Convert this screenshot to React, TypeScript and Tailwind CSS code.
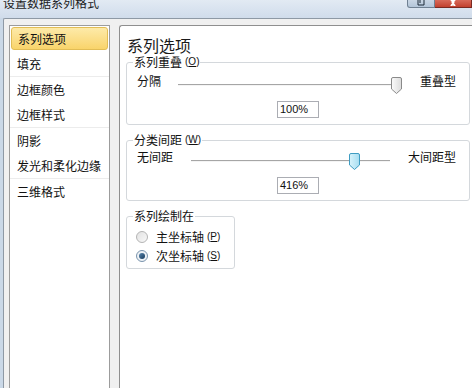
import React from 'react';

const cjk = "font-['Noto_Sans_CJK_SC',sans-serif]";
const latin = "font-['Liberation_Sans',sans-serif]";

const navGroups = [
  ['系列选项', '填充'],
  ['边框颜色', '边框样式'],
  ['阴影', '发光和柔化边缘'],
  ['三维格式'],
];

function Key({ k }: { k: string }) {
  return (
    <span className={`${latin} text-[10px] ml-[3px]`}>
      (<span className="underline">{k}</span>)
    </span>
  );
}

function Slider({ width, track, thumb, active }: { width: number; track: number; thumb: number; active?: boolean }) {
  return (
    <div className="relative h-[18px] shrink-0" style={{ width }}>
      <div className="absolute left-0 top-[11px] h-px bg-[#a6a6a6]" style={{ width: track }} />
      <div className="absolute left-0 top-[12px] h-px bg-[#f4f4f4]" style={{ width: track }} />
      <svg className="absolute top-[4px]" style={{ left: thumb }} width="11" height="17" viewBox="0 0 11 17">
        <defs>
          <linearGradient id={active ? 'tb' : 'tg'} x1="0" y1="0" x2="1" y2="0">
            <stop offset="0" stopColor={active ? '#d8f3fb' : '#fbfbfb'} />
            <stop offset="1" stopColor={active ? '#a6ddf1' : '#dcdcdc'} />
          </linearGradient>
        </defs>
        <path
          d="M2 0.5 H9 Q10.5 0.5 10.5 2 V12 L5.5 16.5 L0.5 12 V2 Q0.5 0.5 2 0.5 Z"
          fill={`url(#${active ? 'tb' : 'tg'})`}
          stroke={active ? '#3f9cc2' : '#8a8a8a'}
        />
      </svg>
    </div>
  );
}

function SliderGroup({
  legend,
  k,
  left,
  right,
  gap,
  slider,
  value,
  rowMt,
}: {
  legend: string;
  k: string;
  left: string;
  right: string;
  gap: number;
  slider: { width: number; track: number; thumb: number; active?: boolean };
  value: string;
  rowMt: string;
}) {
  return (
    <fieldset className="mr-[2px] border border-[#d4d8dc] rounded-[3px] pb-[6px]">
      <legend className="ml-[6px] px-[1px] text-[12px] leading-[14px] flex items-center">
        {legend}
        <Key k={k} />
      </legend>
      <div className={`flex items-center h-[18px] pl-[10px] pr-[13px] text-[12px] ${rowMt}`}>
        <span className="leading-[14px] -mt-[2px]">{left}</span>
        <div style={{ marginLeft: gap }}>
          <Slider {...slider} />
        </div>
        <span className="ml-auto leading-[14px] -mt-[2px]">{right}</span>
      </div>
      <div className={`${latin} mx-auto mt-[10px] w-[42px] h-[17px] border border-[#abadb3] bg-white text-[11px] leading-[15px] pl-[2px]`}>
        {value}
      </div>
    </fieldset>
  );
}

function Radio({ checked, label, k }: { checked?: boolean; label: string; k: string }) {
  return (
    <div className="flex items-center h-[19px] pl-[9px]">
      <span
        className={`w-[12px] h-[12px] rounded-full border flex items-center justify-center ${
          checked ? 'border-[#7a94ad] bg-[#eef2f6]' : 'border-[#b4b4b4] bg-gradient-to-br from-[#e2e2e2] to-[#f8f8f8]'
        }`}
      >
        {checked && <span className="w-[6px] h-[6px] rounded-full bg-gradient-to-br from-[#5a87ad] to-[#173b5d]" />}
      </span>
      <span className="ml-[8px] text-[12px] leading-[14px]">{label}</span>
      <Key k={k} />
    </div>
  );
}

export default function App() {
  return (
    <div className={`${cjk} w-[472px] h-[388px] overflow-hidden flex flex-col bg-[#cad8e7] text-[#111]`}>
      {/* title bar */}
      <div className="h-[18px] shrink-0 flex items-start justify-between bg-gradient-to-b from-[#e2eaf3] to-[#d0dceb]">
        <span className="ml-[3px] -mt-[3px] text-[12px] leading-[12px] text-[#1b1b1b]">设置数据系列格式</span>
        <div className="flex">
          <div className="w-[28px] h-[8px] border border-t-0 border-[#6f8092] rounded-bl-[3px] bg-gradient-to-b from-[#c9d6e4] to-[#b3c5d9] flex justify-center">
            <svg width="8" height="6" viewBox="0 0 8 6">
              <path d="M1 0 V5 H7 V0 M3 3 V0" stroke="#1d2a38" fill="none" />
            </svg>
          </div>
          <div className="w-[37px] h-[8px] border border-t-0 border-l-0 border-[#7a2a22] bg-gradient-to-b from-[#d86a5a] to-[#c2402e] flex justify-center">
            <svg width="12" height="6" viewBox="0 0 12 6">
              <path d="M2 -3 L7 3 M10 -3 L5 3 M4 6 L6 3.5 M8 6 L6 3.5" stroke="#fff" strokeWidth="2" fill="none" />
            </svg>
          </div>
        </div>
      </div>

      {/* client */}
      <div className="flex-1 min-h-0 flex pl-[3px]">
        <div className="flex-1 flex gap-[9px] bg-[#f0f0f0] border-l border-t border-[#8e99a5] rounded-tl-[2px] pt-[6px] pl-[5px]">
          {/* nav list */}
          <div className="w-[101px] shrink-0 bg-white border border-b-0 border-[#9c9c9c] text-[12px]">
            {navGroups.map((group, gi) => (
              <div key={gi} className={gi < navGroups.length - 1 ? 'border-b border-[#ececec]' : ''}>
                {group.map((item) => {
                  const sel = item === '系列选项';
                  return (
                    <div key={item} className="h-[25px] p-[1px]">
                      <div
                        className={`h-full flex items-center pl-[6px] leading-[14px] rounded-[3px] ${
                          sel ? 'bg-gradient-to-b from-[#fdeaa8] to-[#f9d46a] border border-[#e2bd55] pl-[5px]' : ''
                        }`}
                      >
                        {item}
                      </div>
                    </div>
                  );
                })}
              </div>
            ))}
          </div>

          {/* content panel */}
          <div className="flex-1 bg-white border-l border-t border-[#8f8f8f] rounded-tl-[3px] pt-[10px] pl-[6px]">
            <div className="pl-[1px] text-[16px] leading-[18px] text-[#1a1a1a]">系列选项</div>
            <div className="mt-[1px] flex flex-col gap-[8px]">
              <SliderGroup
                legend="系列重叠"
                k="O"
                left="分隔"
                right="重叠型"
                gap={17}
                slider={{ width: 225, track: 219, thumb: 213 }}
                value="100%"
                rowMt="mt-[4px]"
              />
              <SliderGroup
                legend="分类间距"
                k="W"
                left="无间距"
                right="大间距型"
                gap={18}
                slider={{ width: 199, track: 199, thumb: 158, active: true }}
                value="416%"
                rowMt="mt-[2px]"
              />
              <fieldset className="w-[109px] border border-[#d4d8dc] rounded-[3px] pb-[3px]">
                <legend className="ml-[6px] px-[1px] text-[12px] leading-[14px]">系列绘制在</legend>
                <div className="mt-[4px]">
                  <Radio label="主坐标轴" k="P" />
                  <Radio checked label="次坐标轴" k="S" />
                </div>
              </fieldset>
            </div>
          </div>
        </div>
      </div>
    </div>
  );
}
